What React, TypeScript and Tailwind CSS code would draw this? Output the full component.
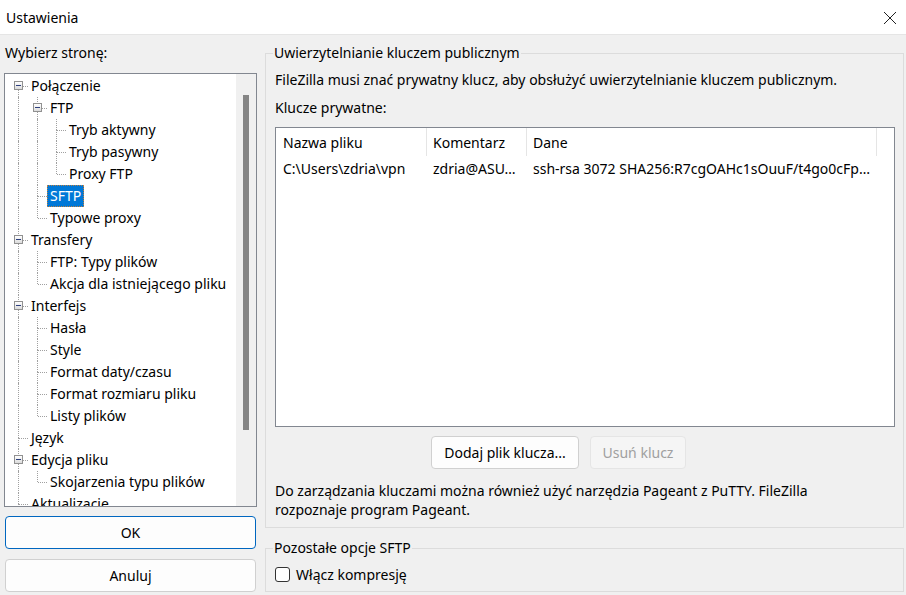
import React from "react";

type TreeNode = {
  label: string;
  children?: TreeNode[];
  selected?: boolean;
};

const tree: TreeNode[] = [
  {
    label: "Połączenie",
    children: [
      {
        label: "FTP",
        children: [{ label: "Tryb aktywny" }, { label: "Tryb pasywny" }, { label: "Proxy FTP" }],
      },
      { label: "SFTP", selected: true },
      { label: "Typowe proxy" },
    ],
  },
  {
    label: "Transfery",
    children: [{ label: "FTP: Typy plików" }, { label: "Akcja dla istniejącego pliku" }],
  },
  {
    label: "Interfejs",
    children: [
      { label: "Hasła" },
      { label: "Style" },
      { label: "Format daty/czasu" },
      { label: "Format rozmiaru pliku" },
      { label: "Listy plików" },
    ],
  },
  { label: "Język" },
  { label: "Edycja pliku", children: [{ label: "Skojarzenia typu plików" }] },
  { label: "Aktualizacje" },
  { label: "Logowanie" },
  { label: "Debugowanie" },
];

type Row = {
  node: TreeNode;
  depth: number;
  guides: boolean[];
  hasNext: boolean;
  first: boolean;
};

function flatten(nodes: TreeNode[], depth = 0, guides: boolean[] = []): Row[] {
  const rows: Row[] = [];
  nodes.forEach((node, i) => {
    const hasNext = i < nodes.length - 1;
    rows.push({ node, depth, guides, hasNext, first: depth === 0 && i === 0 });
    if (node.children) rows.push(...flatten(node.children, depth + 1, [...guides, hasNext]));
  });
  return rows;
}

const dot = "border-dotted border-[#a0a0a0]";

function TreeRow({ row }: { row: Row }) {
  const { node } = row;
  return (
    <div className="flex h-[22px] items-center">
      {row.guides.map((g, i) => (
        <div key={i} className="relative h-full w-[19px] shrink-0">
          {g && <span className={`absolute left-[9px] top-0 h-full border-l ${dot}`} />}
        </div>
      ))}
      <div className="relative h-full w-[19px] shrink-0">
        {!row.first && <span className={`absolute left-[9px] top-0 h-[11px] border-l ${dot}`} />}
        {row.hasNext && <span className={`absolute left-[9px] top-[11px] h-[11px] border-l ${dot}`} />}
        <span className={`absolute left-[10px] top-[11px] w-[9px] border-t ${dot}`} />
        {node.children && (
          <span className="absolute left-[5px] top-[6px] flex h-[9px] w-[9px] items-center justify-center border border-[#919191] bg-gradient-to-b from-white to-[#dcdcdc]">
            <span className="h-px w-[5px] bg-[#2d3f7d]" />
          </span>
        )}
      </div>
      <span
        className={`whitespace-nowrap px-[2px] leading-[20px] ${
          node.selected ? "border border-dotted border-[#c08040] bg-[#0078d7] text-white" : "border border-transparent"
        }`}
      >
        {node.label}
      </span>
    </div>
  );
}

function Button({ children, focused, disabled, className = "" }: { children: React.ReactNode; focused?: boolean; disabled?: boolean; className?: string }) {
  return (
    <button
      className={`flex h-[33px] items-center justify-center rounded-[4px] border ${
        focused
          ? "border-[#0067c0] bg-[#fdfdfd] text-black"
          : disabled
          ? "border-[#e5e5e5] bg-[#f5f5f5] text-[#a0a0a0]"
          : "border-[#d0d0d0] bg-[#fdfdfd] text-black"
      } ${className}`}
    >
      {children}
    </button>
  );
}

export default function App() {
  const rows = flatten(tree);
  return (
    <div
      className="flex h-[595px] w-[906px] flex-col overflow-hidden bg-[#f0f0f0] text-[14px] text-black"
      style={{ fontFamily: '"Noto Sans", "Segoe UI", sans-serif' }}
    >
      {/* title bar */}
      <div className="flex h-[35px] shrink-0 items-center justify-between border-b border-[#e5e5e5] bg-white pl-[6px] pr-[9px]">
        <span className="text-[14px]">Ustawienia</span>
        <svg width="14" height="14" viewBox="0 0 14 14" className="mt-[1px]">
          <path d="M1 1L13 13M13 1L1 13" stroke="#222" strokeWidth="1" />
        </svg>
      </div>

      <div className="flex flex-1 gap-[8px] pl-[4px] pr-[2px]">
        {/* left column */}
        <div className="flex w-[253px] shrink-0 flex-col pt-[8px]">
          <div className="pl-[1px] leading-[20px]">Wybierz stronę:</div>
          <div className="mt-[10px] flex h-[434px] border border-[#828790] bg-white">
            <div className="flex-1 overflow-hidden pl-[4px] pt-[1px]">
              {rows.map((r, i) => (
                <TreeRow key={i} row={r} />
              ))}
            </div>
            <div className="w-[20px] shrink-0 bg-[#f0f0f0] pl-[7px] pt-[21px]">
              <div className="h-[335px] w-[6px] bg-[#858585]" />
            </div>
          </div>
          <Button focused className="mx-[1px] mt-[9px]">OK</Button>
          <Button className="mx-[1px] mt-[10px]">Anuluj</Button>
        </div>

        {/* right column */}
        <div className="flex w-[639px] flex-col pt-[8px]">
          <fieldset className="border border-[#dcdcdc] pb-[8px] pl-[9px] pr-[8px]">
            <legend className="ml-[-2px] px-[1px] leading-[20px]">Uwierzytelnianie kluczem publicznym</legend>
            <p className="mt-[7px] leading-[20px]">
              FileZilla musi znać prywatny klucz, aby obsłużyć uwierzytelnianie kluczem publicznym.
            </p>
            <p className="mt-[8px] leading-[20px]">Klucze prywatne:</p>
            <div className="mt-[9px] h-[300px] border border-[#828790] bg-white">
              <div className="flex h-[28px] items-center">
                <div className="flex h-full w-[151px] items-center border-r border-[#e5e5e5] pl-[7px]">Nazwa pliku</div>
                <div className="flex h-full w-[100px] items-center border-r border-[#e5e5e5] pl-[6px]">Komentarz</div>
                <div className="flex h-full w-[350px] items-center border-r border-[#e5e5e5] pl-[6px]">Dane</div>
              </div>
              <div className="flex h-[24px] items-center whitespace-nowrap">
                <div className="w-[151px] pl-[7px]">C:\Users\zdria\vpn</div>
                <div className="w-[100px] pl-[6px]">zdria@ASU…</div>
                <div className="w-[350px] pl-[6px]">ssh-rsa 3072 SHA256:R7cgOAHc1sOuuF/t4go0cFp…</div>
              </div>
            </div>
            <div className="mt-[9px] flex gap-[11px] pl-[156px]">
              <Button className="h-[32px] w-[148px]">Dodaj plik klucza...</Button>
              <Button disabled className="h-[32px] w-[96px]">Usuń klucz</Button>
            </div>
            <p className="mt-[12px] leading-[19px]">
              Do zarządzania kluczami można również użyć narzędzia Pageant z PuTTY. FileZilla
              <br />
              rozpoznaje program Pageant.
            </p>
          </fieldset>

          <fieldset className="mt-[10px] border border-[#dcdcdc] pb-[7px] pl-[9px]">
            <legend className="ml-[-2px] px-[1px] leading-[20px]">Pozostałe opcje SFTP</legend>
            <label className="mt-[6px] flex h-[20px] items-center gap-[6px]">
              <span className="h-[15px] w-[15px] rounded-[3px] border border-[#333] bg-white" />
              Włącz kompresję
            </label>
          </fieldset>
        </div>
      </div>
    </div>
  );
}
